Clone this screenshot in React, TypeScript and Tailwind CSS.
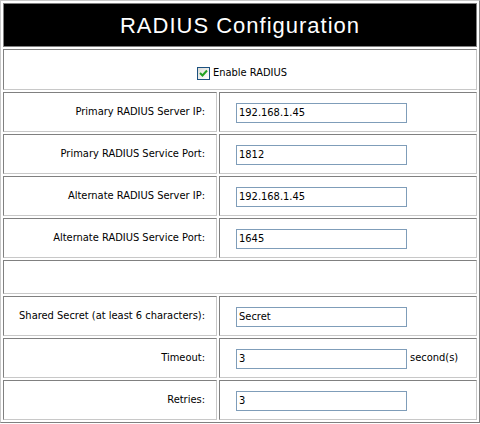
import React from 'react'

const rows = [
  { label: 'Primary RADIUS Server IP:', value: '192.168.1.45' },
  { label: 'Primary RADIUS Service Port:', value: '1812' },
  { label: 'Alternate RADIUS Server IP:', value: '192.168.1.45' },
  { label: 'Alternate RADIUS Service Port:', value: '1645' },
]

const lower = [
  { label: 'Shared Secret (at least 6 characters):', value: 'Secret' },
  { label: 'Timeout:', value: '3', unit: 'second(s)' },
  { label: 'Retries:', value: '3' },
]

const font = '"DejaVu Sans Condensed", "DejaVu Sans", sans-serif'

// inset cell border like an old border=1 table
const cell = 'border border-t-[#808080] border-l-[#808080] border-b-[#c8c8c8] border-r-[#c8c8c8] bg-white'

function Field({ label, value, unit }: { label: string; value: string; unit?: string }) {
  return (
    <div className="flex h-[40px] gap-[2px]">
      <div className={`${cell} flex w-[214px] items-center justify-end pr-[11px]`}>{label}</div>
      <div className={`${cell} flex flex-1 items-center pl-[16px] pt-[1px]`}>
        <input
          defaultValue={value}
          className="h-[20px] w-[171px] border border-[#7f9db9] bg-white px-[2px] text-[11px] text-black outline-none"
          style={{ fontFamily: font }}
        />
        {unit && <span className="ml-[3px]">{unit}</span>}
      </div>
    </div>
  )
}

function CheckBox() {
  return (
    <span className="inline-flex h-[13px] w-[13px] items-center justify-center border border-[#1c5180] bg-gradient-to-br from-[#dcdcd7] to-[#ffffff]">
      <svg width="9" height="9" viewBox="0 0 9 9">
        <path d="M1 4 L3.5 6.5 L8 1.5" stroke="#21a121" strokeWidth="2" fill="none" />
      </svg>
    </span>
  )
}

export default function App() {
  return (
    <div className="h-[424px] w-[480px] bg-white text-[11px] text-black" style={{ fontFamily: font }}>
      <div className="flex flex-col gap-[2px] border border-t-[#c8c8c8] border-l-[#c8c8c8] border-b-[#808080] border-r-[#808080] p-[2px]">
        <div
          className="flex h-[44px] items-center justify-center border border-[#808080] bg-black text-[22px] tracking-[1px] text-white"
          style={{ fontFamily: '"Liberation Sans", Arial, sans-serif' }}
        >
          RADIUS Configuration
        </div>
        <div className={`${cell} flex h-[41px] items-center justify-center gap-[3px] pl-[4px] pt-[7px]`}>
          <CheckBox />
          <span>Enable RADIUS</span>
        </div>
        {rows.map((r) => (
          <Field key={r.label} {...r} />
        ))}
        <div className={`${cell} h-[34px]`} />
        {lower.map((r) => (
          <Field key={r.label} {...r} />
        ))}
      </div>
    </div>
  )
}
